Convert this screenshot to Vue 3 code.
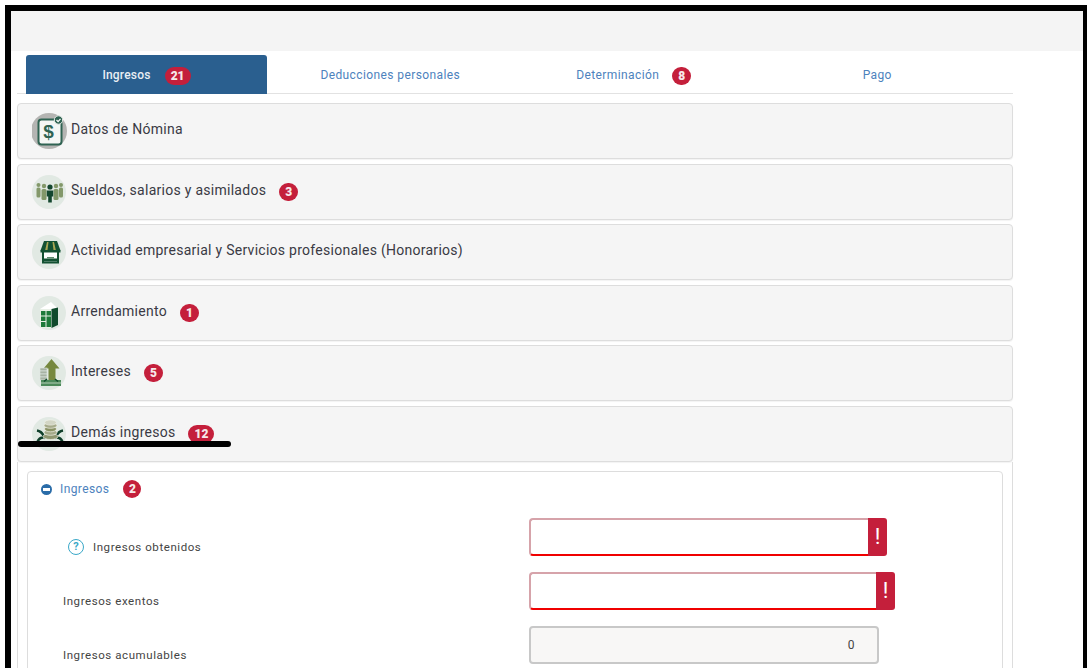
<script setup>
const tabs = [
  { label: 'Ingresos', badge: 21, active: true },
  { label: 'Deducciones personales' },
  { label: 'Determinación', badge: 8 },
  { label: 'Pago' }
]
const panels = [
  { id: 'nomina', title: 'Datos de Nómina' },
  { id: 'sueldos', title: 'Sueldos, salarios y asimilados', badge: 3 },
  { id: 'tienda', title: 'Actividad empresarial y Servicios profesionales (Honorarios)' },
  { id: 'casa', title: 'Arrendamiento', badge: 1 },
  { id: 'intereses', title: 'Intereses', badge: 5 },
  { id: 'demas', title: 'Demás ingresos', badge: 12 }
]
const fields = [
  { label: 'Ingresos obtenidos', help: true, width: 358, error: true },
  { label: 'Ingresos exentos', width: 366, error: true },
  { label: 'Ingresos acumulables', width: 350, value: '0' }
]
</script>

<template>
  <div class="frame">
    <div class="topbar"></div>
    <main class="content">
      <nav class="tabs">
        <div v-for="t in tabs" :key="t.label" class="tab" :class="{ active: t.active }">
          <span>{{ t.label }}</span>
          <b v-if="t.badge" class="badge tab-badge" :class="{ wide: t.badge > 9 }">{{ t.badge }}</b>
        </div>
      </nav>

      <section class="accordion">
        <div v-for="p in panels" :key="p.id" class="panel">
          <svg class="icon" viewBox="2 -1 38 38" width="38" height="38">
            <template v-if="p.id === 'nomina'">
              <circle cx="19" cy="18" r="18" fill="#b4b4b2" />
              <rect x="8.500" y="6.500" width="23" height="25" rx="3" fill="#f4f6f4" stroke="#2f6352" stroke-width="2" />
              <text x="18.500" y="25" text-anchor="middle" class="dollar">$</text>
              <circle cx="28.500" cy="7" r="4.200" fill="#2f6352" stroke="#e8ece8" />
              <path d="M26.500 7l1.600 1.600 2.400-2.800" fill="none" stroke="#fff" stroke-width="1.200" />
            </template>
            <template v-else>
              <circle cx="19" cy="18" r="17" fill="#e1e9e3" />
              <g v-if="p.id === 'sueldos'">
                <g fill="#83986a">
                  <circle cx="8.500" cy="11" r="2" /><rect x="6.500" y="13.500" width="4" height="10" rx="1.500" />
                  <circle cx="31" cy="11" r="2" /><rect x="29" y="13.500" width="4" height="10" rx="1.500" />
                  <circle cx="14" cy="12" r="2.200" /><rect x="11.500" y="15" width="5" height="11" rx="1.500" />
                  <circle cx="26" cy="12" r="2.200" /><rect x="23.500" y="15" width="5" height="11" rx="1.500" />
                </g>
                <circle cx="20" cy="13" r="2.600" fill="#14472f" />
                <path d="M16.800 16.500h6.400v6h-1.400v6h-3.600v-6h-1.400z" fill="#14472f" />
              </g>
              <g v-else-if="p.id === 'tienda'">
                <path d="M13 17h15v11.500H13z" fill="#fff" stroke="#135132" stroke-width="2" />
                <path d="M14 7h13l3.500 9.500h-20z" fill="#135132" />
                <path d="M17 8l-1.800 8h2.300l1-8zM22.500 8l1 8h2.300l-1.800-8z" fill="#a9a653" />
                <path d="M10.500 16h20v2.500h-20z" fill="#135132" />
                <path d="M14 24.500h13v3H14z" fill="#135132" />
                <path d="M17 23h7v1.500h-7z" fill="#5d8a6c" />
              </g>
              <g v-else-if="p.id === 'casa'">
                <path d="M10 14l11-7 7 7z" fill="#fff" />
                <path d="M10 14h11.500v19H10z" fill="#e8f0e6" />
                <path d="M21.500 14L28 12.500V30l-6.500 3z" fill="#0f4a2c" />
                <g fill="#1d7a3a">
                  <rect x="11" y="16" width="4.500" height="4.500" /><rect x="16.500" y="16" width="4.500" height="4.500" />
                  <rect x="11" y="21.500" width="4.500" height="4.500" /><rect x="16.500" y="21.500" width="4.500" height="10.500" />
                  <rect x="11" y="27" width="4.500" height="5" />
                </g>
              </g>
              <g v-else-if="p.id === 'intereses'">
                <path d="M21.500 4l8 9.500h-4V25h-7V13.500h-5z" fill="#76883f" />
                <g fill="#a7b2a3" stroke="#e1e9e3" stroke-width=".6">
                  <rect x="10" y="13" width="7" height="3" /><rect x="10" y="16" width="7" height="3" />
                  <rect x="10" y="19" width="7" height="3" /><rect x="10" y="22" width="7" height="3" />
                </g>
                <path d="M11 25h20v6H11z" fill="#4c8a5a" />
                <path d="M11 28h20" stroke="#cfe0cf" stroke-width=".8" />
                <path d="M14 26.500l3-2.500M28 26.500l-3-2.500" fill="none" stroke="#0f4a2c" stroke-width="1.500" />
              </g>
              <g v-else>
                <path d="M7 14.500c3 .5 5 2 6.500 5 .5 1 1 2 2 2.500M7.500 26c1-3 3-4.500 6-4.500M33 14.500c-3 .5-5 2-6.500 5-.5 1-1 2-2 2.500M32.500 26c-1-3-3-4.500-6-4.500" fill="none" stroke="#103f2a" stroke-width="2.600" />
                <g fill="#a5aa8a" stroke="#f0f0e6" stroke-width=".7">
                  <ellipse cx="20.500" cy="20.500" rx="7.500" ry="3" fill="#8f9670" />
                  <ellipse cx="20.500" cy="16.500" rx="6.500" ry="2.800" />
                  <ellipse cx="20.500" cy="13" rx="6" ry="2.800" fill="#8a9265" />
                  <ellipse cx="20.500" cy="9.500" rx="6.500" ry="2.800" />
                  <ellipse cx="20.500" cy="6.500" rx="6" ry="2.600" fill="#d2d5c4" />
                </g>
              </g>
            </template>
          </svg>
          <span class="title">{{ p.title }}</span>
          <b v-if="p.badge" class="badge" :class="{ wide: p.badge > 9 }">{{ p.badge }}</b>
        </div>

        <div class="panel-body">
          <div class="inner">
            <div class="inner-head">
              <span class="minus"></span>
              <span class="inner-title">Ingresos</span>
              <b class="badge">2</b>
            </div>
            <div v-for="f in fields" :key="f.label" class="row">
              <div class="label" :class="{ helped: f.help }">
                <span v-if="f.help" class="help">?</span>
                <span>{{ f.label }}</span>
              </div>
              <div class="field" :class="{ invalid: f.error }" :style="{ width: f.width + 'px' }">
                <div class="input">{{ f.value }}</div>
                <div v-if="f.error" class="addon">!</div>
              </div>
            </div>
          </div>
        </div>
      </section>
    </main>
    <div class="annotation"></div>
  </div>
</template>

<style>
html, body { margin: 0; background: #fff; overflow: hidden; }
</style>

<style scoped>
.frame {
  position: relative;
  box-sizing: border-box;
  margin: 5px 0 0 5px;
  width: 1082px;
  height: 663px;
  overflow: hidden;
  background: #fff;
  border-top: 6px solid #000;
  border-left: 6px solid #000;
  border-right: 4px solid #000;
  font-family: Roboto, "Liberation Sans", sans-serif;
  color: #333;
}
.topbar { height: 40px; background: #f4f4f4; }
.content { width: 996px; margin-left: 6px; padding-top: 4px; }
.tabs {
  display: grid;
  grid-template-columns: repeat(4, 241.5px);
  gap: 2px;
  padding-left: 9px;
  height: 39px;
  border-bottom: 1px solid #e2e2e2;
  box-sizing: border-box;
}
.tab {
  display: flex;
  align-items: center;
  justify-content: center;
  gap: 13px;
  font-size: 12px;
  letter-spacing: .4px;
  color: #4d82bd;
  height: 39px;
  box-sizing: border-box;
}
.tab.active {
  width: 241px;
  gap: 14px;
  background: #2a5f8f;
  color: #e8eef4;
  font-weight: 500;
  letter-spacing: .2px;
  border-radius: 3px 3px 0 0;
}
.tab-badge { transform: translateY(1px); }
.badge {
  display: inline-flex;
  align-items: center;
  justify-content: center;
  min-width: 19px;
  height: 18px;
  padding: 0 4px;
  box-sizing: border-box;
  border-radius: 9px;
  background: #c41f3b;
  color: #f6e9ea;
  font-size: 12px;
  font-weight: 900;
  letter-spacing: 0;
}
.badge.wide { min-width: 26px; }
.accordion { display: flex; flex-direction: column; gap: 4.5px; margin-top: 9px; }
.panel {
  display: flex;
  align-items: center;
  height: 56px;
  box-sizing: border-box;
  padding-left: 14px;
  background: #f5f5f5;
  border: 1px solid #ddd;
  border-radius: 4px;
  box-shadow: 0 1px 1px rgba(0, 0, 0, .05);
}
.icon { flex: none; margin-right: 1px; }
.dollar { font: 900 19px "Liberation Sans", sans-serif; fill: #2f6352; }
.title { font-size: 14px; letter-spacing: .27px; color: #3a3a44; position: relative; top: -2px; }
.panel .badge { margin-left: 13px; }
.panel-body {
  margin-top: -4.5px;
  height: 210px;
  padding: 9px 9px 0;
  border: 1px solid #ddd;
  border-width: 0 1px;
}
.inner {
  border: 1px solid #ddd;
  border-radius: 4px 4px 0 0;
  padding-left: 35px;
  height: 240px;
}
.inner-head {
  display: flex;
  align-items: center;
  height: 35px;
  margin-left: -22px;
}
.minus {
  position: relative;
  width: 11px;
  height: 11px;
  border-radius: 50%;
  background: #2a6ca8;
  margin-right: 8px;
}
.minus::after {
  content: "";
  position: absolute;
  left: 2px;
  right: 2px;
  top: 4px;
  height: 3px;
  background: #fff;
}
.inner-title { font-size: 12px; letter-spacing: .4px; color: #4d82bd; }
.inner-head .badge { margin-left: 14px; border-radius: 50%; min-width: 18px; padding: 0; }
.row {
  display: flex;
  align-items: flex-end;
  height: 38px;
  margin-bottom: 16px;
}
.inner-head + .row { margin-top: 11px; }
.label {
  display: flex;
  align-items: center;
  width: 466px;
  font-size: 11.5px;
  letter-spacing: .57px;
  color: #444;
  padding-bottom: 2px;
}
.label.helped { padding-left: 5px; width: 461px; padding-bottom: 1px; }
.help {
  display: flex;
  align-items: center;
  justify-content: center;
  width: 14px;
  height: 14px;
  margin-right: 9px;
  border: 1.5px solid #3aa8c8;
  border-radius: 50%;
  color: #3aa8c8;
  font-size: 11px;
  font-weight: 700;
  letter-spacing: 0;
}
.field { display: flex; height: 38px; flex: none; }
.input {
  flex: 1;
  box-sizing: border-box;
  display: flex;
  align-items: center;
  justify-content: flex-end;
  padding-right: 22px;
  border: 2px solid #c8c8c8;
  border-radius: 4px;
  background: #f8f7f6;
  font-size: 12px;
  letter-spacing: .5px;
  color: #444;
}
.invalid .input {
  background: #fff;
  border-color: #d6a3aa;
  border-bottom: 2px solid #f00000;
  border-right: 0;
  border-radius: 4px 0 0 4px;
}
.addon {
  width: 19px;
  display: flex;
  align-items: center;
  justify-content: center;
  background: #c41f3b;
  color: #fff;
  font: 400 22px Roboto, sans-serif;
  border-radius: 0 3px 3px 0;
}
.annotation {
  position: absolute;
  left: 7px;
  top: 430px;
  width: 213px;
  height: 6px;
  border-radius: 3px;
  background: #000;
}
</style>
